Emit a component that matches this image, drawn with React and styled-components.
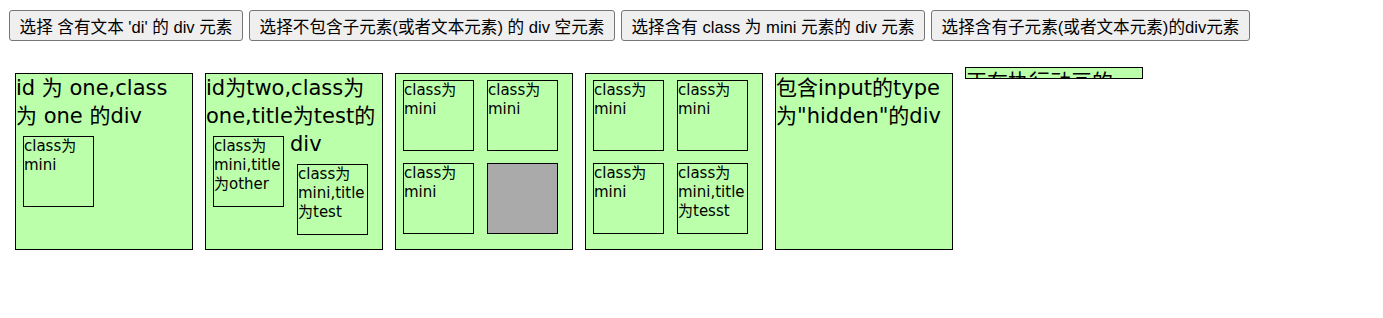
import React from "react";
import styled, { createGlobalStyle } from "styled-components";

const GlobalStyle = createGlobalStyle`
  html, body {
    margin: 0;
    padding: 0;
    background: #fff;
  }
  body {
    padding: 10px 9px;
  }
`;

const Toolbar = styled.div`
  display: flex;
  gap: 6px;
  align-items: center;
  margin-bottom: 26px;
`;

const Button = styled.button`
  box-sizing: border-box;
  width: ${(p) => p.$w}px;
  height: 31px;
  padding: 0;
  margin: 0;
  background: #efefef;
  border: 1px solid #767676;
  border-radius: 3px;
  color: #000;
  font-family: "Liberation Sans", "Noto Sans CJK SC", Arial, sans-serif;
  font-size: 16.6px;
  white-space: nowrap;
  cursor: default;
`;

const Boxes = styled.div`
  display: flex;
  align-items: flex-start;
  gap: 12px;
  padding-left: 6px;
`;

const Box = styled.div`
  box-sizing: content-box;
  width: 176px;
  height: ${(p) => (p.$anim ? 10 : 175)}px;
  margin-top: ${(p) => (p.$anim ? 0 : 6)}px;
  overflow: ${(p) => (p.$anim ? "hidden" : "visible")};
  flex: none;
  background: #bbffaa;
  border: 1px solid #000;
  font-family: "DejaVu Sans", Verdana, "Noto Sans CJK SC", sans-serif;
  font-size: 21px;
  line-height: 28px;
  color: #000;
`;

const Mini = styled.div`
  float: left;
  box-sizing: content-box;
  width: 69px;
  height: 69px;
  margin: 6px 6px 6px 7px;
  background: ${(p) => (p.$empty ? "#aaaaaa" : "#bbffaa")};
  border: 1px solid #000;
  font-size: 15px;
  line-height: 19px;
  overflow: hidden;
`;

const HiddenInput = styled.input`
  display: none;
`;

export default function App() {
  return (
    <>
      <GlobalStyle />
      <Toolbar>
        <Button $w={234}>选择 含有文本 'di' 的 div 元素</Button>
        <Button $w={366}>选择不包含子元素(或者文本元素) 的 div 空元素</Button>
        <Button $w={304}>选择含有 class 为 mini 元素的 div 元素</Button>
        <Button $w={319}>选择含有子元素(或者文本元素)的div元素</Button>
      </Toolbar>
      <Boxes>
        <Box>
          id 为 one,class 为 one 的div
          <Mini>class为mini</Mini>
        </Box>
        <Box>
          id为two,class为one,title为test的div
          <Mini>class为mini,title为other</Mini>
          <Mini>class为mini,title为test</Mini>
        </Box>
        <Box>
          <Mini>class为mini</Mini>
          <Mini>class为mini</Mini>
          <Mini>class为mini</Mini>
          <Mini $empty />
        </Box>
        <Box>
          <Mini>class为mini</Mini>
          <Mini>class为mini</Mini>
          <Mini>class为mini</Mini>
          <Mini>class为mini,title为tesst</Mini>
        </Box>
        <Box>
          包含input的type为"hidden"的div
          <HiddenInput type="hidden" />
        </Box>
        <Box $anim>正在执行动画的div</Box>
      </Boxes>
    </>
  );
}
